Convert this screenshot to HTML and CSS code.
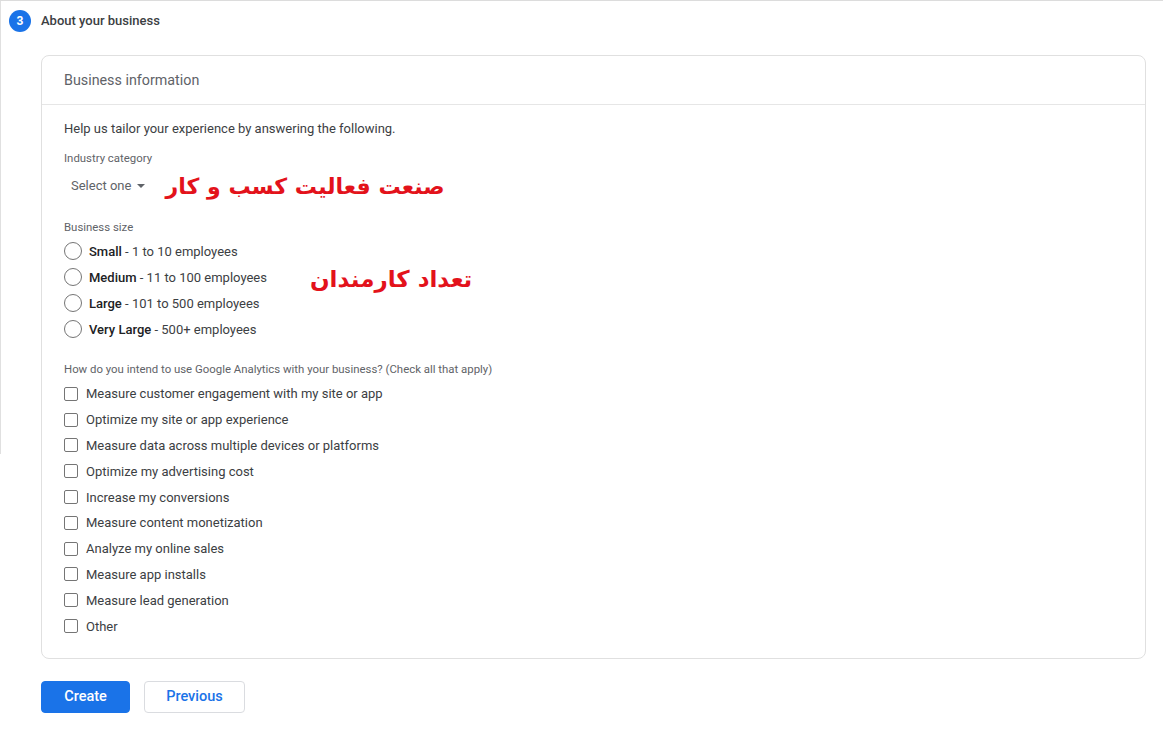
FILE: index.html
```html
<!DOCTYPE html>
<html lang="en">
<head>
<meta charset="utf-8">
<title>About your business</title>
<link rel="stylesheet" href="styles.css">
</head>
<body>
<div class="page">
  <div class="side-line"></div>
  <div class="step-head">
    <span class="step-num">3</span>
    <span class="step-title">About your business</span>
  </div>

  <section class="card">
    <div class="card-head">Business information</div>
    <div class="card-body">
      <p class="intro">Help us tailor your experience by answering the following.</p>

      <div class="field-label">Industry category</div>
      <div class="select-row">
        <div class="select">Select one <span class="caret"></span></div>
        <span class="note" dir="rtl">صنعت فعالیت کسب و کار</span>
      </div>

      <div class="field-label size-label">Business size</div>
      <div class="size-row">
        <ul class="radios">
          <li><span class="radio"></span><span><b>Small</b> - 1 to 10 employees</span></li>
          <li><span class="radio"></span><span><b>Medium</b> - 11 to 100 employees</span></li>
          <li><span class="radio"></span><span><b>Large</b> - 101 to 500 employees</span></li>
          <li><span class="radio"></span><span><b>Very Large</b> - 500+ employees</span></li>
        </ul>
        <span class="note note-size" dir="rtl">تعداد کارمندان</span>
      </div>

      <div class="field-label use-label">How do you intend to use Google Analytics with your business? (Check all that apply)</div>
      <ul class="checks">
        <li><span class="box"></span>Measure customer engagement with my site or app</li>
        <li><span class="box"></span>Optimize my site or app experience</li>
        <li><span class="box"></span>Measure data across multiple devices or platforms</li>
        <li><span class="box"></span>Optimize my advertising cost</li>
        <li><span class="box"></span>Increase my conversions</li>
        <li><span class="box"></span>Measure content monetization</li>
        <li><span class="box"></span>Analyze my online sales</li>
        <li><span class="box"></span>Measure app installs</li>
        <li><span class="box"></span>Measure lead generation</li>
        <li><span class="box"></span>Other</li>
      </ul>
    </div>
  </section>

  <div class="actions">
    <button class="btn btn-primary">Create</button>
    <button class="btn btn-secondary">Previous</button>
  </div>
</div>
</body>
</html>
```

FILE: styles.css
```css
* { box-sizing: border-box; }

html, body {
  margin: 0;
  padding: 0;
  background: #ffffff;
}

body {
  font-family: Roboto, "Liberation Sans", Arial, sans-serif;
  color: #3c4043;
  width: 1163px;
  height: 734px;
  overflow: hidden;
}

.page {
  position: relative;
  border-top: 1px solid #dcdcdc;
  height: 734px;
}

.side-line {
  position: absolute;
  left: 0;
  top: 0;
  width: 1px;
  height: 453px;
  background: #e0e0e0;
}

.step-head {
  height: 39px;
  display: flex;
  align-items: center;
  padding-left: 9px;
  gap: 10px;
}

.step-num {
  width: 22px;
  height: 22px;
  border-radius: 50%;
  background: #1a73e8;
  color: #fff;
  font-size: 12px;
  font-weight: 700;
  display: flex;
  align-items: center;
  justify-content: center;
}

.step-title {
  font-size: 13px;
  font-weight: 500;
  color: #3c4043;
}

.card {
  margin: 15px 0 0 41px;
  width: 1105px;
  border: 1px solid #e0e0e0;
  border-radius: 8px;
}

.card-head {
  height: 49px;
  border-bottom: 1px solid #e6e6e6;
  padding-left: 22px;
  display: flex;
  align-items: center;
  font-size: 14.3px;
  color: #5f6368;
}

.card-body {
  padding: 15px 22px 19px;
}

.intro {
  margin: 0;
  font-size: 13px;
  line-height: 18px;
  color: #3c4043;
}

.field-label {
  margin-top: 12px;
  font-size: 11.4px;
  line-height: 16px;
  color: #5f6368;
}

.size-label { margin-top: 21px; }
.use-label { margin-top: 19px; }

.select-row {
  margin-top: 8px;
  display: flex;
  align-items: center;
  gap: 20px;
  height: 24px;
}

.select {
  padding-left: 7px;
  font-size: 13px;
  line-height: 24px;
  color: #5f6368;
  display: flex;
  align-items: center;
  gap: 6px;
}

.caret {
  width: 0;
  height: 0;
  border-left: 4px solid transparent;
  border-right: 4px solid transparent;
  border-top: 4px solid #5f6368;
}

.note {
  font-family: "DejaVu Sans", sans-serif;
  font-weight: bold;
  font-size: 22.1px;
  line-height: 34px;
  color: #e3121b;
}

.size-row {
  margin-top: 3px;
  display: flex;
  align-items: flex-start;
  gap: 43px;
}

.note-size {
  margin-top: 24px;
  font-size: 23px;
}

ul {
  list-style: none;
  margin: 0;
  padding: 0;
}

.radios li {
  height: 26px;
  display: flex;
  align-items: center;
  gap: 7px;
  font-size: 13px;
  color: #3c4043;
}

.radios b {
  font-weight: 500;
  color: #202124;
}

.radio {
  width: 18px;
  height: 18px;
  border-radius: 50%;
  border: 1.5px solid #757575;
  flex: none;
}

.checks {
  margin-top: 4px;
}

.checks li {
  height: 25.8px;
  display: flex;
  align-items: center;
  gap: 8px;
  font-size: 13px;
  color: #3c4043;
}

.box {
  width: 14px;
  height: 14px;
  border: 1.5px solid #757575;
  border-radius: 2px;
  flex: none;
}

.actions {
  margin: 22px 0 0 41px;
  display: flex;
  gap: 14px;
}

.btn {
  height: 32px;
  border-radius: 4px;
  font-family: Roboto, "Liberation Sans", Arial, sans-serif;
  font-size: 14.5px;
  font-weight: 500;
  cursor: pointer;
}

.btn-primary {
  width: 89px;
  background: #1a73e8;
  border: 1px solid #1a73e8;
  color: #fff;
}

.btn-secondary {
  width: 101px;
  background: #fff;
  border: 1px solid #dadce0;
  color: #1a73e8;
}
```
